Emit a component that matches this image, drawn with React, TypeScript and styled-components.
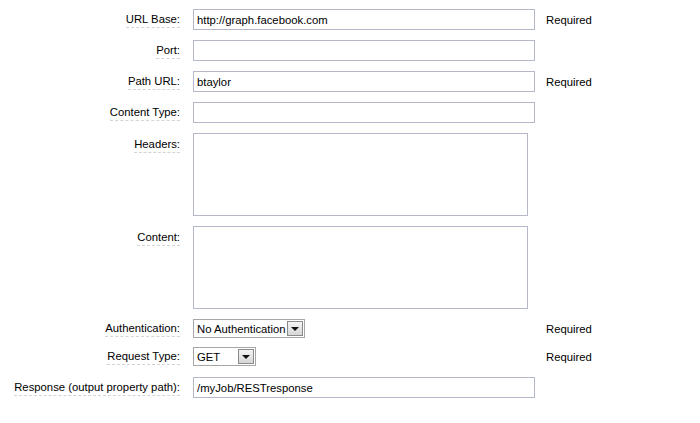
import React from 'react';
import styled, { createGlobalStyle } from 'styled-components';

const GlobalStyle = createGlobalStyle`
  html, body {
    margin: 0;
    padding: 0;
    background: #ffffff;
  }
  body {
    font-family: "Liberation Sans", Arial, sans-serif;
    font-size: 11.3px;
    color: #000;
  }
`;

const Form = styled.div`
  display: flex;
  flex-direction: column;
  padding-top: 9px;
  width: 700px;
`;

const Row = styled.div<{ $gap?: number; $top?: boolean }>`
  display: grid;
  grid-template-columns: 193px 342px auto;
  align-items: ${p => (p.$top ? 'start' : 'center')};
  margin-bottom: ${p => (p.$gap ?? 10)}px;
`;

const LabelCell = styled.div<{ $top?: boolean }>`
  text-align: right;
  padding-right: 13px;
  padding-top: ${p => (p.$top ? '4px' : '0')};
`;

const Label = styled.span`
  display: inline-block;
  line-height: 14px;
  padding-bottom: 1px;
  border-bottom: 1px dashed #d4d4d4;
`;

const TextInput = styled.input`
  box-sizing: border-box;
  width: 342px;
  height: 21px;
  margin: 0;
  padding: 0 3px;
  border: 1px solid #b5b8c8;
  background: #fff;
  font-family: "Liberation Sans", Arial, sans-serif;
  font-size: 11.3px;
  color: #000;
  outline: none;
`;

const TextArea = styled.textarea`
  display: block;
  box-sizing: border-box;
  width: 335px;
  height: 83px;
  margin: 0;
  padding: 2px 3px;
  border: 1px solid #b5b8c8;
  resize: none;
  background: #fff;
  font-family: "Liberation Sans", Arial, sans-serif;
  font-size: 11.3px;
  outline: none;
`;

const Select = styled.div<{ $width: number }>`
  box-sizing: border-box;
  width: ${p => p.$width}px;
  height: 19px;
  display: flex;
  align-items: center;
  justify-content: space-between;
  border: 1px solid #a7a7a7;
  background: #fff;
  padding-left: 3px;
`;

const SelectText = styled.span`
  white-space: nowrap;
  line-height: 14px;
`;

const DropButton = styled.div`
  box-sizing: border-box;
  width: 16px;
  height: 15px;
  margin-right: 1px;
  flex-shrink: 0;
  display: flex;
  align-items: center;
  justify-content: center;
  border: 1px solid #8a8a8a;
  background: linear-gradient(#f4f4f4, #d6d6d6);
`;

const Arrow = styled.span`
  width: 0;
  height: 0;
  border-left: 4px solid transparent;
  border-right: 4px solid transparent;
  border-top: 4px solid #111;
`;

const Hint = styled.div`
  padding-left: 11px;
  color: #000;
`;

const Dropdown: React.FC<{ value: string; width: number }> = ({ value, width }) => (
  <Select $width={width}>
    <SelectText>{value}</SelectText>
    <DropButton>
      <Arrow />
    </DropButton>
  </Select>
);

const App: React.FC = () => {
  return (
    <>
      <GlobalStyle />
      <Form>
        <Row>
          <LabelCell><Label>URL Base:</Label></LabelCell>
          <TextInput defaultValue="http://graph.facebook.com" />
          <Hint>Required</Hint>
        </Row>
        <Row>
          <LabelCell><Label>Port:</Label></LabelCell>
          <TextInput defaultValue="" />
        </Row>
        <Row>
          <LabelCell><Label>Path URL:</Label></LabelCell>
          <TextInput defaultValue="btaylor" />
          <Hint>Required</Hint>
        </Row>
        <Row>
          <LabelCell><Label>Content Type:</Label></LabelCell>
          <TextInput defaultValue="" />
        </Row>
        <Row $top>
          <LabelCell $top><Label>Headers:</Label></LabelCell>
          <TextArea defaultValue="" />
        </Row>
        <Row $top>
          <LabelCell $top><Label>Content:</Label></LabelCell>
          <TextArea defaultValue="" />
        </Row>
        <Row $gap={9}>
          <LabelCell><Label>Authentication:</Label></LabelCell>
          <Dropdown value="No Authentication" width={112} />
          <Hint>Required</Hint>
        </Row>
        <Row $gap={11}>
          <LabelCell><Label>Request Type:</Label></LabelCell>
          <Dropdown value="GET" width={63} />
          <Hint>Required</Hint>
        </Row>
        <Row>
          <LabelCell><Label>Response (output property path):</Label></LabelCell>
          <TextInput defaultValue="/myJob/RESTresponse" />
        </Row>
      </Form>
    </>
  );
};

export default App;
